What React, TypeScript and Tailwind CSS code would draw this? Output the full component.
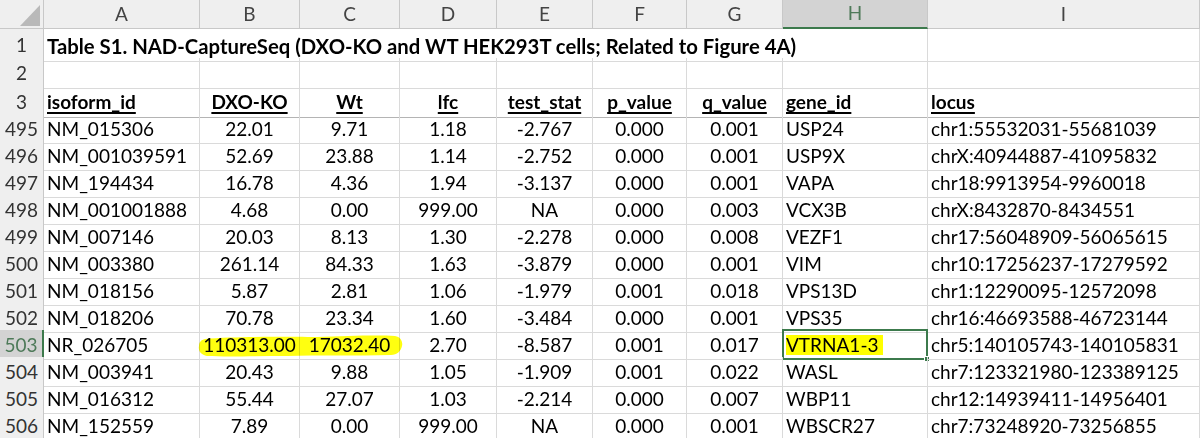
import React from 'react'

const cols = ['A', 'B', 'C', 'D', 'E', 'F', 'G', 'H', 'I']

const headers = ['isoform_id', 'DXO-KO', 'Wt', 'lfc', 'test_stat', 'p_value', 'q_value', 'gene_id', 'locus']

const rows: [number, string[]][] = [
  [495, ['NM_015306', '22.01', '9.71', '1.18', '-2.767', '0.000', '0.001', 'USP24', 'chr1:55532031-55681039']],
  [496, ['NM_001039591', '52.69', '23.88', '1.14', '-2.752', '0.000', '0.001', 'USP9X', 'chrX:40944887-41095832']],
  [497, ['NM_194434', '16.78', '4.36', '1.94', '-3.137', '0.000', '0.001', 'VAPA', 'chr18:9913954-9960018']],
  [498, ['NM_001001888', '4.68', '0.00', '999.00', 'NA', '0.000', '0.003', 'VCX3B', 'chrX:8432870-8434551']],
  [499, ['NM_007146', '20.03', '8.13', '1.30', '-2.278', '0.000', '0.008', 'VEZF1', 'chr17:56048909-56065615']],
  [500, ['NM_003380', '261.14', '84.33', '1.63', '-3.879', '0.000', '0.001', 'VIM', 'chr10:17256237-17279592']],
  [501, ['NM_018156', '5.87', '2.81', '1.06', '-1.979', '0.001', '0.018', 'VPS13D', 'chr1:12290095-12572098']],
  [502, ['NM_018206', '70.78', '23.34', '1.60', '-3.484', '0.000', '0.001', 'VPS35', 'chr16:46693588-46723144']],
  [503, ['NR_026705', '110313.00', '17032.40', '2.70', '-8.587', '0.001', '0.017', 'VTRNA1-3', 'chr5:140105743-140105831']],
  [504, ['NM_003941', '20.43', '9.88', '1.05', '-1.909', '0.001', '0.022', 'WASL', 'chr7:123321980-123389125']],
  [505, ['NM_016312', '55.44', '27.07', '1.03', '-2.214', '0.000', '0.007', 'WBP11', 'chr12:14939411-14956401']],
  [506, ['NM_152559', '7.89', '0.00', '999.00', 'NA', '0.000', '0.001', 'WBSCR27', 'chr7:73248920-73256855']],
]

// A, H, I are left aligned, the numbers in between are centered
const align = (i: number) => (i === 0 || i >= 7 ? 'justify-start pl-[3px]' : 'justify-center')

const grid = 'grid grid-cols-[44px_156px_100px_100px_97px_96px_94px_96px_145px_272px]'

function Corner() {
  return (
    <div className="h-[29px] bg-[#efefef] border-r border-b border-[#c8c8c8] flex items-end justify-end pr-[3px] pb-[2px]">
      <svg width="20" height="21" viewBox="0 0 20 21">
        <polygon points="20,0 20,21 0,21" fill="#b9b9b9" />
      </svg>
    </div>
  )
}

function RowHead({ n, active }: { n: number | string; active?: boolean }) {
  return (
    <div
      className={`flex items-center justify-center pt-[1px] border-b ${
        active
          ? 'bg-[#d3d3d3] text-[#4e7a59] border-r-2 border-r-[#3c7a4c] border-b-[#c8c8c8]'
          : 'bg-[#efefef] text-[#333] border-r border-[#c8c8c8]'
      }`}
    >
      {n}
    </div>
  )
}

export default function App() {
  return (
    <div className="w-[1200px] h-[438px] overflow-hidden bg-white text-[19px] text-black font-['Lato',sans-serif]">
      {/* column letters */}
      <div className={grid}>
        <Corner />
        {cols.map(c => (
          <div
            key={c}
            className={`h-[29px] flex items-center justify-center text-[19px] ${
              c === 'H'
                ? 'bg-[#d3d3d3] text-[#4e7a59] border-r border-[#c8c8c8] border-b-2 border-b-[#3c7a4c]'
                : 'bg-[#efefef] text-[#444] border-r border-b border-[#c8c8c8]'
            }`}
          >
            {c}
          </div>
        ))}
      </div>

      {/* row 1: title overflows across A..H */}
      <div className={`${grid} h-[29px]`}>
        <RowHead n={1} />
        <div className="col-span-8 flex items-center pl-[3px] pt-[2px] text-[20.3px] font-bold border-b border-r border-[#dadada] whitespace-nowrap">
          Table S1. NAD-CaptureSeq (DXO-KO and WT HEK293T cells; Related to Figure 4A)
        </div>
        <div className="border-b border-r border-[#dadada]" />
      </div>

      {/* row 2 */}
      <div className={`${grid} h-[29px]`}>
        <RowHead n={2} />
        {cols.map(c => (
          <div key={c} className="border-b border-r border-[#dadada]" />
        ))}
      </div>

      {/* row 3: headers */}
      <div className={`${grid} h-[26.5px]`}>
        <RowHead n={3} />
        {headers.map((h, i) => (
          <div
            key={h}
            className={`flex items-center pt-[1px] ${align(i)} font-bold underline decoration-2 underline-offset-[3px] border-b border-b-[#b4b4b4] border-r border-r-[#dadada]`}
          >
            {h}
          </div>
        ))}
      </div>

      {rows.map(([n, cells]) => {
        const sel = n === 503
        return (
          <div key={n} className={`${grid} h-[27px] relative`}>
            <RowHead n={n} active={sel} />
            {cells.map((v, i) => (
              <div
                key={i}
                className={`relative flex items-center pt-[1px] ${align(i)} border-b border-r border-[#dadada] whitespace-nowrap`}
              >
                {sel && i === 7 ? (
                  <>
                    <span className="bg-[#ffff00] pr-[5px] leading-[20px]">{v}</span>
                    <div className="absolute -left-px -top-px right-[-1px] bottom-[-1px] border-2 border-[#3c7a4c]" />
                    <div className="absolute right-[-3px] bottom-[-3px] w-[6px] h-[6px] bg-[#3c7a4c] border border-white" />
                  </>
                ) : (
                  <span className="relative z-10">{v}</span>
                )}
              </div>
            ))}
            {sel && (
              <svg className="absolute left-[197px] top-[4px] mix-blend-multiply" width="207" height="24" viewBox="0 0 207 24">
                <path
                  d="M8 5 C40 2 90 3 120 3 C150 2 180 1 198 2 C204 3 206 8 205 12 C204 17 200 21 194 21 C160 22 120 21 90 22 C60 22 30 23 10 22 C4 21 1 17 2 12 C2 8 4 6 8 5 Z"
                  fill="#ffff10"
                />
              </svg>
            )}
          </div>
        )
      })}
    </div>
  )
}
